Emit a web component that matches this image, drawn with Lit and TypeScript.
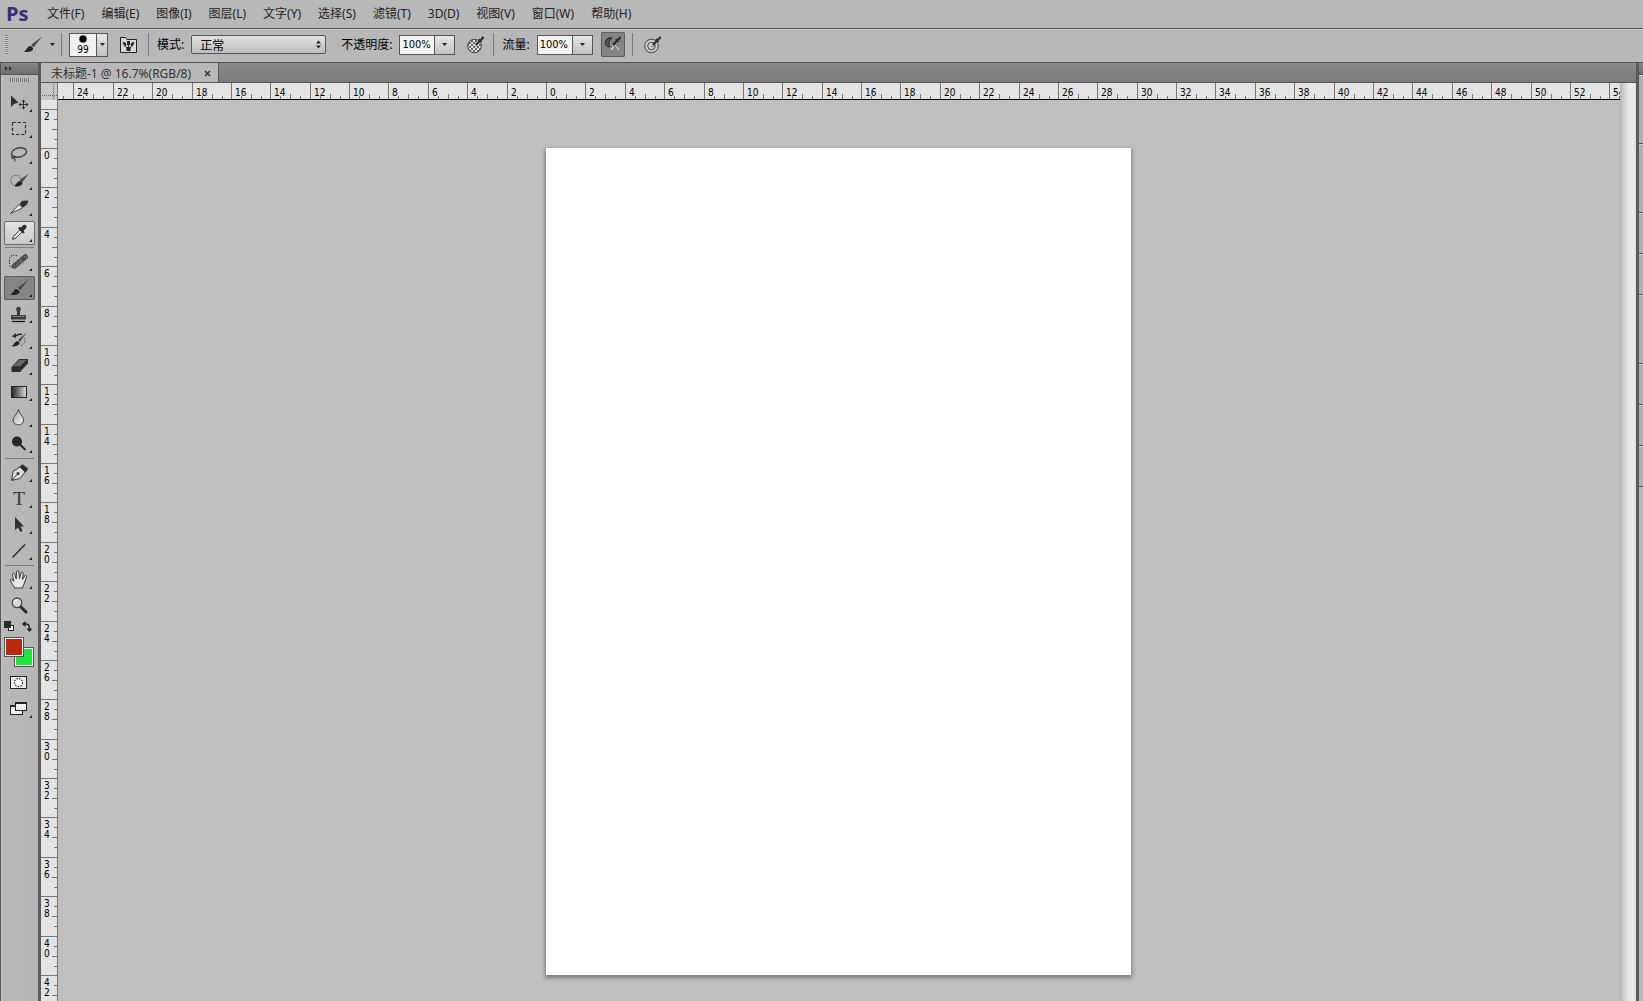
import { LitElement, html, svg, css, TemplateResult, SVGTemplateResult } from "lit";
import { customElement } from "lit/decorators.js";
import { classMap } from "lit/directives/class-map.js";

interface Tool {
  id: string;
  label: string;
  icon: SVGTemplateResult | null;
  flyout?: boolean;
  state?: "hover" | "active";
}

const INK = "#2f2f2f";

const brush = svg`
  <path d="M24.5 3.5 13.5 12l2.5 2.5z" fill="#4a4a4a"/>
  <path d="M6 18.5c3 .2 3-5 7-5.4 2 .2 3 1.6 2.6 3.2-1.4 3-6 3.200-9.600 2.200z" fill="#252525"/>
  <path d="m13.300 12.200 3 3" stroke="#bbb" stroke-width="1"/>`;

const TOOL_GROUPS: Tool[][] = [
  [
    { id: "move", label: "移动工具", flyout: true, icon: svg`
      <path d="M7 4.500v11.500l3-3 4.500-1.500z" fill="${INK}"/>
      <path d="M19.500 9v9M15 13.500h9" stroke="${INK}" stroke-width="1"/>
      <path d="m19.500 8.500 2 2.200h-4zM19.500 18.500l2-2.200h-4zM14.500 13.500l2.200-2v4zM24.500 13.500l-2.200-2v4z" fill="${INK}"/>` },
    { id: "marquee", label: "矩形选框工具", flyout: true, icon: svg`
      <rect x="8.500" y="5.500" width="13" height="12" fill="none" stroke="${INK}" stroke-width="1.200" stroke-dasharray="3.200 2"/>` },
    { id: "lasso", label: "套索工具", flyout: true, icon: svg`
      <ellipse cx="15" cy="9.500" rx="7.600" ry="4.600" transform="rotate(-12 15 9.500)" fill="none" stroke="#444" stroke-width="1.500"/>
      <path d="M8.500 12.500c-1.500 1-1 2.800.8 2.600 1.800-.4 2.800-1.400 1-1.800-1.500 0-1.300 2 .6 3.200v2" fill="none" stroke="#444" stroke-width="1.200"/>` },
    { id: "quick", label: "快速选择工具", flyout: true, icon: svg`
      <circle cx="12" cy="11.500" r="5.300" fill="none" stroke="${INK}" stroke-dasharray="1.200 1.400"/>
      <path d="M24.500 5 16 10.500l2.500 2.500z" fill="#4a4a4a"/>
      <path d="M10 16.800c2-.4 3-4.600 6.400-5l2 1.800c.4 3.200-5 5-8.400 3.200z" fill="#252525"/>` },
    { id: "slice", label: "切片工具", flyout: true, icon: svg`
      <path d="M6.500 18.500 15 9.500l3.500 3.500z" fill="#eee" stroke="#444"/>
      <path d="m15.500 9 3-3.200 6-.3-1.500 4-4 3z" fill="${INK}"/>` },
    { id: "eyedropper", label: "吸管工具", flyout: true, state: "hover", icon: svg`
      <path d="m8.500 18.300 1-3 6.500-6.500 2 2-6.500 6.500z" fill="#eee" stroke="${INK}"/>
      <path d="m14 7.600 5.200 5.200 1.400-1.600-1-1.400 2.600-2.800c1.200-2-1-4-3-2.800l-2.400 2.400-1.200-.8z" fill="${INK}"/>` },
  ],
  [
    { id: "heal", label: "污点修复画笔工具", flyout: true, icon: svg`
      <path d="M13 6C9 4 5.500 6 5.500 10v4c0 2 1 3 2.500 3.500" fill="none" stroke="${INK}" stroke-width="1.200" stroke-dasharray="1.200 1.400"/>
      <path d="M10.500 16 21.200 7" stroke="#4a4a4a" stroke-width="5.500" stroke-linecap="round"/>
      <path d="m12.500 11.500 4.500 5M15.500 9l4.500 5" stroke="#8a8a8a" stroke-width=".8"/>
      <path d="M10 16h.8M12 15h.8M15.500 11.500h.8M16.500 13h.8M20 7h.8M22 7h.8" stroke="#b5b5b5"/>` },
    { id: "brush", label: "画笔工具", flyout: true, state: "active", icon: brush },
    { id: "stamp", label: "仿制图章工具", flyout: true, icon: svg`
      <path d="M13 13V9.500c-3.600-6.400 6.600-6.400 3 0V13h6v4.500H7V13z" fill="#3c3c3c"/>
      <path d="M8.500 14.500h12" stroke="#7c7c7c"/><path d="M8 19.500h13" stroke="#111" stroke-width="1.200"/>` },
    { id: "history", label: "历史记录画笔工具", flyout: true, icon: svg`
      <path d="M22.500 4.500 14 12l2 2z" fill="#4a4a4a"/>
      <path d="M7 18c3 0 3-4.400 6.400-5l2.200 1.600c0 3.400-5 4.600-8.600 3.400z" fill="#252525"/>
      <path d="M11 8.500c3-2.500 5-2.500 7-2" fill="none" stroke="${INK}" stroke-width="1.500"/><path d="m7.500 8.500 4.500-3.500v5z" fill="${INK}"/>
      <path d="M20.500 10.500c1.500 3-.5 6.500-4.500 7.500" fill="none" stroke="${INK}" stroke-dasharray="1.200 1.400"/>` },
    { id: "eraser", label: "橡皮擦工具", flyout: true, icon: svg`
      <path d="m8 13 7-7.500h8.500L16 13z" fill="#666" stroke="${INK}"/>
      <path d="M8 13h8v4.500H8zM16 13l7.500-7.500v4L16 17.500z" fill="#2b2b2b" stroke="${INK}"/>` },
    { id: "gradient", label: "渐变工具", flyout: true, icon: svg`
      <defs><linearGradient id="ramp"><stop offset="0" stop-color="#222"/><stop offset="1" stop-color="#ddd"/></linearGradient></defs>
      <rect x="7.500" y="6.500" width="15" height="11" fill="url(#ramp)" stroke="#222"/>` },
    { id: "blur", label: "模糊工具", flyout: true, icon: svg`
      <defs><linearGradient id="drop" x2="1" y2="1"><stop offset="0" stop-color="#999"/><stop offset="1" stop-color="#fff"/></linearGradient></defs>
      <path d="M14.500 3.500c.5 4 5 6.500 5 10.500 0 6.500-10.500 6.500-10.500 0 0-4 5-6.500 5.500-10.500z" fill="url(#drop)" stroke="#444"/>` },
    { id: "dodge", label: "减淡工具", flyout: true, icon: svg`
      <circle cx="13" cy="9.500" r="5" fill="#262626"/><path d="m15.500 12 6 6" stroke="#262626" stroke-width="2"/>` },
  ],
  [
    { id: "pen", label: "钢笔工具", flyout: true, icon: svg`
      <path d="m7.500 19.500 1.500-9 7-4.500 5 5-5 6.500z" fill="#ddd" stroke="#3c3c3c"/>
      <path d="m15.500 5.500 3-2.200 5.800 4.500-2.500 3.400z" fill="#2a2a2a"/>
      <path d="m8 19 5.500-6" stroke="#333"/><circle cx="14" cy="12.500" r="1.500" fill="#333"/>` },
    { id: "type", label: "横排文字工具", flyout: true, icon: null },
    { id: "path", label: "路径选择工具", flyout: true, icon: svg`
      <path d="M11 4v13l3-2.500 2.500 4.500 2-1-2-4.500h3.500z" fill="${INK}"/>` },
    { id: "line", label: "直线工具", flyout: true, icon: svg`
      <path d="M8.500 18.500 21 5.500" stroke="${INK}" stroke-width="1.500"/>` },
  ],
  [
    { id: "hand", label: "抓手工具", flyout: true, icon: svg`
      <path d="M10.500 20c-.5-2-3.500-5.500-4.300-8 .4-1.500 2-1 3.600 1.400L8.500 6.500c0-1.800 1.900-1.800 2.300 0l1.400 4.500.3-7c.2-1.600 2.300-1.600 2.500 0l.5 6.600 1.500-5.600c.6-1.500 2.500-1 2.300.6l-.8 6 2-3.600c1-1.200 2.500-.4 2 1l-2.500 7-1.500 4z" fill="#e6e6e6" stroke="#3a3a3a"/>` },
    { id: "zoom", label: "缩放工具", icon: svg`
      <circle cx="13" cy="8.800" r="4.800" fill="#d6d6d6" stroke="#4a4a4a" stroke-width="1.300"/>
      <path d="M10.500 8c.5-1.500 1.500-2 3-2" stroke="#fff" fill="none"/>
      <path d="m17 13 5 5" stroke="#2c2c2c" stroke-width="3" stroke-linecap="round"/>` },
  ],
];

const MENUS = ["文件(F)", "编辑(E)", "图像(I)", "图层(L)", "文字(Y)", "选择(S)", "滤镜(T)", "3D(D)", "视图(V)", "窗口(W)", "帮助(H)"];

// Screen pixels taken by two centimetres at the current zoom.
const STEP = 39.38;
const at = (n: number): number => Math.round(n * STEP);

@customElement("ps-ruler")
class PsRuler extends LitElement {
  static properties = {
    vertical: { type: Boolean, reflect: true },
    from: { type: Number },
    to: { type: Number },
  };
  declare vertical: boolean;
  declare from: number;
  declare to: number;

  static styles = css`
    :host {
      display: flex;
      overflow: hidden;
      min-width: 0;
      min-height: 0;
      box-sizing: border-box;
      background: #e3e3e3;
      color: #000;
      font: 10px/10px "DejaVu Sans Condensed", "Noto Sans", sans-serif;
      --t: linear-gradient(#777, #777);
      border-bottom: 1px solid #000;
    }
    :host([vertical]) {
      flex-direction: column;
      border-bottom: 0;
      border-right: 1px solid #777;
    }
    .lead {
      flex: none;
      width: 15px;
      background: var(--t) 5px 100% / 1px 3px no-repeat;
    }
    .cell {
      flex: none;
      box-sizing: border-box;
      border-left: 1px solid #777;
      padding: 5px 0 0 3px;
      background: var(--t) 9px 100% / 1px 3px no-repeat, var(--t) 19px 100% / 1px 5px no-repeat,
        var(--t) 29px 100% / 1px 3px no-repeat;
    }
    :host([vertical]) .lead {
      width: auto;
      height: 9px;
      background: none;
    }
    :host([vertical]) .cell {
      display: flex;
      flex-direction: column;
      border-left: 0;
      border-top: 1px solid #777;
      padding: 2px 0 0 3px;
      background: var(--t) 100% 9px / 3px 1px no-repeat, var(--t) 100% 19px / 5px 1px no-repeat,
        var(--t) 100% 29px / 3px 1px no-repeat;
    }
  `;

  render() {
    const cells: TemplateResult[] = [];
    for (let n = this.from; n <= this.to; n++) {
      const size = at(n + 1) - at(n);
      const text = String(Math.abs(n * 2));
      cells.push(
        this.vertical
          ? html`<div class="cell" style="height:${size}px">${[...text].map((d) => html`<span>${d}</span>`)}</div>`
          : html`<div class="cell" style="width:${size}px">${text}</div>`
      );
    }
    return html`<div class="lead"></div>${cells}`;
  }
}

@customElement("ps-toolbox")
class PsToolbox extends LitElement {
  static styles = css`
    :host {
      display: flex;
      flex-direction: column;
      box-sizing: border-box;
      border-left: 1px solid #555;
      border-right: 3px solid #5a5a5a;
      background: linear-gradient(90deg, #c2c2c2, #b8b8b8 3px, #b6b6b6);
    }
    .head {
      height: 11px;
      flex: none;
      border-bottom: 1px solid #555;
      background: linear-gradient(#868686, #6e6e6e);
    }
    .head svg,
    .grip,
    .icon {
      display: block;
    }
    .grip {
      flex: none;
      width: 19px;
      height: 4px;
      margin: 3px 0 9px 9px;
      background: repeating-linear-gradient(90deg, #757575 0 1px, #c4c4c4 1px 2px);
    }
    .tools {
      display: flex;
      flex-direction: column;
      gap: 2px;
      padding-left: 3px;
    }
    button {
      padding: 0;
      margin: 0;
      border: 0;
      background: none;
      color: #2f2f2f;
    }
    .tool {
      width: 31px;
      height: 24px;
      display: grid;
      border-radius: 2px;
    }
    .tool > * {
      grid-area: 1 / 1;
    }
    .hover {
      background: linear-gradient(#e4e4e4, #c8c8c8);
      box-shadow: inset 0 0 0 1px #6b6b6b;
    }
    .active {
      background: #858585;
      box-shadow: inset 0 0 0 1px #5e5e5e;
    }
    .letter {
      font: 19px/24px "Liberation Serif", serif;
      padding-right: 1px;
      text-align: center;
    }
    hr {
      width: 29px;
      height: 1px;
      margin: 0 0 0 1px;
      border: 0;
      background: #7d7d7d;
    }
    .mini {
      display: flex;
      justify-content: space-between;
      width: 29px;
      margin: 3px 0 5px 3px;
    }
    .swatches {
      display: grid;
      grid-template-columns: 10px 10px 10px;
      grid-template-rows: 10px 10px 10px;
      margin-left: 3px;
    }
    .swatch {
      border: 1px solid #555;
      box-shadow: inset 0 0 0 1px #fff;
    }
    .front {
      grid-area: 1 / 1 / 3 / 3;
      background: #b72a10;
      z-index: 1;
    }
    .back {
      grid-area: 2 / 2 / 4 / 4;
      background: #1ee63c;
    }
    .extra {
      width: 31px;
      height: 24px;
      margin: 2px 0 0 3px;
    }
  `;

  private tool(t: Tool) {
    return html`<button class=${classMap({ tool: true, hover: t.state === "hover", active: t.state === "active" })} aria-label=${t.label}>
      ${t.icon ? null : html`<span class="letter">T</span>`}
      <svg class="icon" width="31" height="24" viewBox="0 0 31 24">
        ${t.icon}${t.flyout ? svg`<path d="M28 18v3h-3z" fill="#222"/>` : null}
      </svg>
    </button>`;
  }

  render() {
    return html`
      <div class="head"><svg width="14" height="11" viewBox="0 0 14 11"><path d="m4 3 3 2.500L4 8zM8 3l3 2.500L8 8z" fill="#333"/></svg></div>
      <div class="grip"></div>
      <div class="tools">
        ${TOOL_GROUPS.map((g, i) => html`${i ? html`<hr />` : null}${g.map((t) => this.tool(t))}`)}
      </div>
      <div class="mini">
        <button aria-label="默认前景色和背景色">
          <svg class="icon" width="11" height="11" viewBox="0 0 11 11">
            <rect x="4.500" y="4.500" width="5" height="5" fill="#fff" stroke="#222"/><rect width="7" height="7" fill="#2b2b2b"/>
          </svg>
        </button>
        <button aria-label="切换前景色和背景色">
          <svg class="icon" width="11" height="11" viewBox="0 0 11 11">
            <path d="M2.500 3c3.500-.5 5 1 5 5" fill="none" stroke="#222" stroke-width="1.500"/>
            <path d="M0 3l3.500-3v6zM7.500 11 4.500 7.500h6z" fill="#222"/>
          </svg>
        </button>
      </div>
      <div class="swatches">
        <button class="swatch front" aria-label="前景色"></button>
        <button class="swatch back" aria-label="背景色"></button>
      </div>
      <button class="extra" aria-label="以快速蒙版模式编辑">
        <svg class="icon" width="31" height="24" viewBox="0 0 31 24">
          <rect x="6.500" y="7.500" width="16" height="12" fill="#eee" stroke="#222"/>
          <circle cx="14.500" cy="13.500" r="4" fill="#fff" stroke="#222" stroke-width="1.200" stroke-dasharray="1.500 1.200"/>
        </svg>
      </button>
      <button class="extra" aria-label="更改屏幕模式">
        <svg class="icon" width="31" height="24" viewBox="0 0 31 24">
          <rect x="6.500" y="10.500" width="12" height="9" fill="#eee" stroke="#222"/><path d="M6 11h13" stroke="#222" stroke-width="2"/>
          <rect x="11.500" y="7.500" width="11" height="8" fill="#eee" stroke="#222"/><path d="M11 8h12" stroke="#222" stroke-width="2"/>
          <path d="M28 20v3h-3z" fill="#222"/>
        </svg>
      </button>
    `;
  }
}

@customElement("ps-options")
class PsOptions extends LitElement {
  static styles = css`
    :host {
      display: flex;
      align-items: center;
      box-sizing: border-box;
      height: 35px;
      padding: 0 5px 2px;
      border-top: 1px solid #555;
      border-bottom: 1px solid #555;
      background: linear-gradient(#d0d0d0 1px, #b8b8b8 1px);
      color: #000;
      font: 12px/16px "Noto Sans", "Noto Sans CJK SC", sans-serif;
    }
    svg {
      display: block;
    }
    button {
      padding: 0;
      border: 0;
      background: none;
    }
    .grip {
      width: 3px;
      height: 19px;
      background: repeating-linear-gradient(#808080 0 1px, #cfcfcf 1px 2px);
    }
    .current {
      display: flex;
      align-items: center;
      gap: 7px;
      margin: 0 6px 0 15px;
    }
    .sep {
      width: 1px;
      height: 23px;
      background: #7b7b7b;
    }
    .preset {
      display: flex;
      box-sizing: border-box;
      width: 39px;
      height: 24px;
      margin: 0 12px 0 7px;
      border: 1px solid #555;
      background: #f2f2f2;
    }
    .dot {
      display: flex;
      flex-direction: column;
      align-items: center;
      width: 26px;
      font: 10px/11px "DejaVu Sans Condensed", "Noto Sans", sans-serif;
      color: #000;
    }
    .drop {
      flex: 1;
      display: grid;
      place-items: center;
      border-left: 1px solid #555;
      background: linear-gradient(#e6e6e6, #c2c2c2);
    }
    .after {
      margin-left: 11px;
    }
    label {
      margin: 0 7px 0 8px;
    }
    select {
      appearance: none;
      box-sizing: border-box;
      width: 135px;
      height: 19px;
      padding: 0 0 0 8px;
      border: 1px solid #555;
      border-radius: 2px;
      color: #000;
      font: 12px/16px "Noto Sans CJK SC", sans-serif;
      background: linear-gradient(#e2e2e2, #bdbdbd);
    }
    .mode {
      display: grid;
      align-items: center;
      margin-right: 7px;
    }
    .mode > * {
      grid-area: 1 / 1;
    }
    .mode svg {
      justify-self: end;
      margin-right: 4px;
      pointer-events: none;
    }
    .field {
      display: flex;
      box-sizing: border-box;
      width: 56px;
      height: 20px;
      border: 1px solid #555;
      margin-right: 12px;
      background: #f4f4f4;
    }
    input {
      width: 34px;
      box-sizing: border-box;
      border: 0;
      padding: 0 0 0 2px;
      background: none;
      color: #000;
      font: 11px/16px "DejaVu Sans Condensed", "Noto Sans", sans-serif;
    }
    .toggle {
      width: 24px;
      height: 25px;
      margin: 0 7px 0 -4px;
      border-radius: 2px;
      background: #858585;
      box-shadow: inset 0 0 0 1px #5e5e5e;
    }
    .target {
      margin-left: 11px;
    }
    .pressure {
      margin-right: -3px;
    }
  `;

  private caret = svg`<path d="M0 0h5L2.500 3z" fill="#222"/>`;
  private drop(label: string) {
    return html`<button class="drop" aria-label=${label}><svg width="5" height="3" viewBox="0 0 5 3">${this.caret}</svg></button>`;
  }

  render() {
    const pen = svg`<path d="m7.500 11 1-2.800 2 1.800z" fill="#eee" stroke="#555" stroke-width=".5"/><path d="m8.200 8 3.800-3.800-.6-.8 1-.8.8.6L15 1c1.500-1.200 2.800.4 1.600 1.700l-2.200 2 .6.8-.9 1-.8-.7-3.500 3.900z" fill="#2a2a2a"/>`;
    return html`
      <div class="grip"></div>
      <button class="current" aria-label="画笔工具预设">
        <svg width="20" height="17" viewBox="5.500 3 20 17">${brush}</svg>
        <svg width="5" height="3" viewBox="0 0 5 3">${this.caret}</svg>
      </button>
      <div class="sep"></div>
      <div class="preset">
        <button class="dot" aria-label="画笔大小 99">
          <svg width="10" height="10" viewBox="0 0 10 10"><circle cx="5" cy="5" r="4" fill="#777"/><circle cx="5" cy="5" r="3.300" fill="#000"/></svg>
          99
        </button>
        ${this.drop("画笔预设选取器")}
      </div>
      <button aria-label="切换画笔面板">
        <svg width="17" height="17" viewBox="0 0 17 17">
          <path d="M.5 16.500v-15h5l1.500 2h9.500v13z" fill="#d8d8d8" stroke="#222"/>
          <path d="M8.500 15V7.500M8.500 14 4.500 9M8.500 14l4-5" stroke="#333"/>
          <path d="M2.500 6.500 5 6l1.500 3-2 1.500zM7 5h3v4H7zM14.500 6.500 12 6l-1.500 3 2 1.500zM6.500 11h4v4h-4z" fill="#222"/>
        </svg>
      </button>
      <div class="sep after"></div>
      <label for="mode">模式:</label>
      <div class="mode">
        <select id="mode"><option>正常</option></select>
        <svg width="7" height="9" viewBox="0 0 7 9"><path d="M1 3.500h5L3.500.5zM1 5.500h5L3.500 8.500z" fill="#222"/></svg>
      </div>
      <label for="opacity">不透明度:</label>
      <div class="field"><input id="opacity" value="100%" />${this.drop("不透明度滑块")}</div>
      <button class="pressure" aria-label="始终对不透明度使用压力">
        <svg width="18" height="18" viewBox="0 0 18 18">
          <defs><pattern id="chk" width="4" height="4" patternUnits="userSpaceOnUse"><rect width="4" height="4" fill="#e6e6e6"/><path d="M0 0h2v2H0zM2 2h2v2H2z" fill="#666"/></pattern></defs>
          <circle cx="7.500" cy="10" r="6.800" fill="url(#chk)" stroke="#444"/>${pen}
        </svg>
      </button>
      <div class="sep after"></div>
      <label for="flow">流量:</label>
      <div class="field"><input id="flow" value="100%" />${this.drop("流量滑块")}</div>
      <button class="toggle" aria-label="启用喷枪样式的建立效果" aria-pressed="true">
        <svg width="24" height="25" viewBox="0 0 24 25">
          <path d="M11 6C6.500 5 4 8 4.500 11.500 5 14 7 15.500 9 14.500c-2-3-1.500-6 2-8.500z" fill="#555" stroke="#222"/>
          <path d="M11 18c2-6 4-5 7 0M9.500 17.500l3-3" fill="none" stroke="#ddd"/>
          <g transform="translate(3 4)">${pen}</g>
        </svg>
      </button>
      <div class="sep"></div>
      <button class="target" aria-label="始终对大小使用压力">
        <svg width="18" height="18" viewBox="0 0 18 18">
          <circle cx="7.500" cy="10" r="6.800" fill="#ccc" stroke="#444"/><circle cx="7.500" cy="10" r="3.800" fill="none" stroke="#444"/>${pen}
        </svg>
      </button>
    `;
  }
}

@customElement("app-root")
class AppRoot extends LitElement {
  static styles = css`
    :host {
      display: flex;
      flex-direction: column;
      height: 100vh;
      overflow: hidden;
      background: #b8b8b8;
      color: #222;
      font: 12px/16px "Noto Sans", "Noto Sans CJK SC", sans-serif;
    }
    nav {
      display: flex;
      align-items: center;
      height: 28px;
      flex: none;
      gap: 17px;
      padding-left: 6px;
    }
    .logo {
      width: 24px;
      font: bold 20px/24px "Open Sans", "Noto Sans", sans-serif;
      color: #3b2d7d;
    }
    nav a {
      color: inherit;
      text-decoration: none;
      white-space: nowrap;
    }
    ps-options {
      flex: none;
    }
    main {
      flex: 1;
      min-height: 0;
      display: grid;
      grid-template-columns: 41px minmax(0, 1fr) 7px;
    }
    .doc {
      display: grid;
      grid-template-columns: 17px minmax(0, 1fr) 16px;
      grid-template-rows: 20px 17px minmax(0, 1fr);
      min-height: 0;
    }
    .tabs {
      grid-column: 1 / -1;
      display: flex;
      box-sizing: border-box;
      border-bottom: 1px solid #555;
      background: linear-gradient(#888, #7b7b7b);
    }
    .tab {
      display: flex;
      align-items: center;
      gap: 13px;
      padding: 2px 7px 0 10px;
      border-right: 1px solid #555;
      background: #b8b8b8;
      color: #333;
      white-space: nowrap;
    }
    .tab button {
      padding: 0;
      border: 0;
      background: none;
    }
    svg {
      display: block;
    }
    .corner {
      background: #c6c6c6;
      border-right: 1px solid #777;
      box-sizing: border-box;
    }
    .side {
      grid-area: 3 / 1;
    }
    .stage {
      grid-area: 3 / 2;
      overflow: hidden;
      padding-right: 1px;
      background: #bfbfbf;
    }
    .paper {
      width: 585px;
      aspect-ratio: 585 / 827;
      margin: 48px auto 0;
      background: #fff;
      box-shadow: 0 2px 4px 1px rgba(0, 0, 0, 0.35);
    }
    .bar {
      grid-area: 2 / 3 / 4 / 4;
      background: linear-gradient(90deg, #b2b2b2, #d2d2d2 4px, #ebebeb 9px, #ebebeb 13px, #dcdcdc);
    }
    .dock {
      display: flex;
      flex-direction: column;
      border-left: 3px solid #5a5a5a;
    }
    .dockhead {
      height: 11px;
      background: linear-gradient(#888, #6e6e6e);
      border-bottom: 1px solid #555;
    }
    .panel {
      box-sizing: border-box;
      border-bottom: 1px solid #555;
      background: linear-gradient(#d0d0d0 1px, #b0b0b0 1px);
    }
    .tall {
      height: 69px;
    }
    .short {
      height: 41px;
    }
  `;

  render() {
    const panels = ["tall", "tall", "short", "short", "tall", "short", "short", "short"];
    return html`
      <nav>
        <span class="logo">Ps</span>
        ${MENUS.map((m) => html`<a href="#">${m}</a>`)}
      </nav>
      <ps-options></ps-options>
      <main>
        <ps-toolbox></ps-toolbox>
        <section class="doc">
          <div class="tabs">
            <div class="tab">
              <span>未标题-1 @ 16.7%(RGB/8)</span>
              <button aria-label="关闭">
                <svg width="7" height="7" viewBox="0 0 7 7"><path d="m1 1 5 5M6 1 1 6" stroke="#333" stroke-width="1.500"/></svg>
              </button>
            </div>
          </div>
          <div class="corner">
            <svg width="16" height="17" viewBox="0 0 16 17"><path d="M12.500 1v15M1 12.500h15" stroke="#666" stroke-dasharray="1 1"/></svg>
          </div>
          <ps-ruler .from=${-12} .to=${27}></ps-ruler>
          <ps-ruler class="side" vertical .from=${-1} .to=${21}></ps-ruler>
          <div class="stage"><div class="paper"></div></div>
          <div class="bar"></div>
        </section>
        <aside class="dock">
          <div class="dockhead"></div>
          ${panels.map((p) => html`<div class="panel ${p}"></div>`)}
        </aside>
      </main>
    `;
  }
}
